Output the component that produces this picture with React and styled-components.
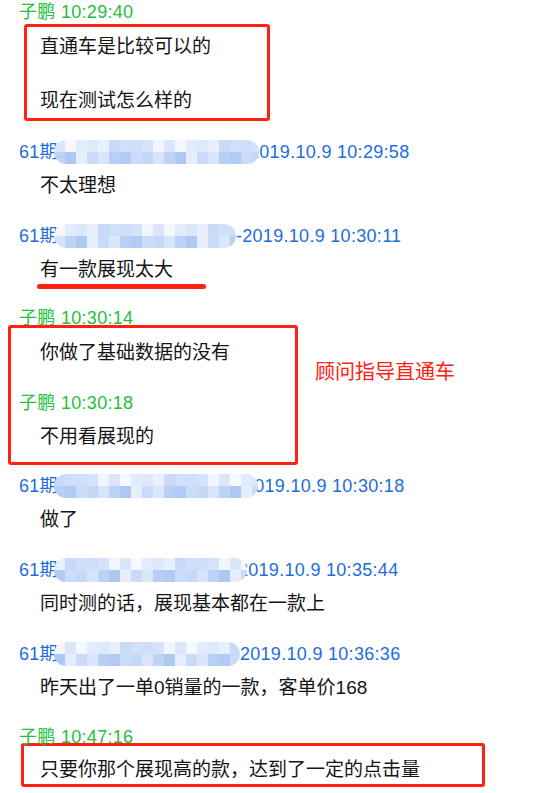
import styled, { createGlobalStyle } from "styled-components";

const Global = createGlobalStyle`
  body {
    margin: 0;
    background: #fff;
  }
`;

const GREEN = "#22c13a";
const BLUE = "#1e6de0";
const RED = "#ff2114";

const Page = styled.div`
  width: 534px;
  height: 793px;
  overflow: hidden;
  font-family: "Liberation Sans", "Noto Sans CJK SC", sans-serif;
  color: #151515;
`;

const Header = styled.div`
  margin-top: ${(p) => p.$gap || 0}px;
  padding-left: calc(19px - var(--inset, 0px));
  height: 24px;
  line-height: 24px;
  font-size: 18px;
  letter-spacing: 0.3px;
  white-space: nowrap;
  color: ${(p) => (p.$me ? GREEN : BLUE)};
`;

const Body = styled.div`
  margin-top: ${(p) => (p.$gap === undefined ? 10 : p.$gap)}px;
  padding-left: calc(40px - var(--inset, 0px));
  height: 24px;
  line-height: 24px;
  font-size: 19px;
  white-space: nowrap;
`;

const Box = styled.div`
  --inset: ${(p) => p.$left + 3}px;
  box-sizing: border-box;
  width: ${(p) => p.$width}px;
  margin-top: ${(p) => p.$top || 0}px;
  margin-left: ${(p) => p.$left}px;
  padding: ${(p) => p.$pt}px 0 ${(p) => p.$pb}px;
  border: 3px solid ${RED};
  border-radius: 3px;
  flex-shrink: 0;
`;

const Row = styled.div`
  display: flex;
  align-items: flex-start;
  margin-top: -5px;
`;

const Note = styled.div`
  margin-left: 17px;
  margin-top: 33px;
  font-size: 20px;
  line-height: 28px;
  color: ${RED};
  white-space: nowrap;
`;

const Underline = styled.div`
  margin: 2px 0 0 37px;
  width: 169px;
  height: 5px;
  border-radius: 3px;
  background: ${RED};
`;

const Mosaic = styled.span`
  position: relative;
  z-index: 1;
  display: inline-grid;
  vertical-align: top;
  grid-auto-flow: column;
  grid-template-rows: 12px 12px;
  grid-auto-columns: 11px;
  width: ${(p) => p.$w}px;
  height: 24px;
  margin-left: -4px;
  border-radius: 12px;
  overflow: hidden;
`;

const Tile = styled.span`
  display: block;
  background: ${(p) => p.$c};
`;

const Rest = styled.span`
  margin-left: ${(p) => p.$ml}px;
`;

const TOP = ["#dbe6fb", "#cfdff9", "#e9f0fd", "#f5f8fe", "#d5e3fa", "#c8daf8", "#e3ecfc", "#f1f6fe", "#d0e0f9", "#dde8fb"];
const BOT = ["#bdd3f6", "#c9dbf8", "#b2cbf4", "#d7e4fa", "#e6eefc", "#b8cff5", "#c4d8f7", "#adc8f3", "#dae6fb", "#cbdcf8"];

const Blur = ({ w, seed }) => {
  const cols = Math.ceil(w / 11);
  const tiles = [];
  for (let i = 0; i < cols; i++) {
    tiles.push(<Tile key={"t" + i} $c={TOP[(i * 3 + seed) % TOP.length]} />);
    tiles.push(<Tile key={"b" + i} $c={BOT[(i * 7 + seed) % BOT.length]} />);
  }
  return <Mosaic $w={w}>{tiles}</Mosaic>;
};

const Student = ({ gap, w, ml, seed, rest }) => (
  <Header $gap={gap}>
    61期
    <Blur w={w} seed={seed} />
    <Rest $ml={ml}>{rest}</Rest>
  </Header>
);

export default function App() {
  return (
    <Page>
      <Global />
      <Header $me>子鹏 10:29:40</Header>
      <Box $left={24} $width={246} $pt={8} $pb={5}>
        <Body $gap={0}>直通车是比较可以的</Body>
        <Body $gap={30}>现在测试怎么样的</Body>
      </Box>

      <Student gap={19} w={205} ml={-10} seed={0} rest="2019.10.9 10:29:58" />
      <Body>不太理想</Body>

      <Student gap={26} w={182} ml={0} seed={3} rest="-2019.10.9 10:30:11" />
      <Body>有一款展现太大</Body>
      <Underline />

      <Header $me $gap={17}>子鹏 10:30:14</Header>
      <Row>
        <Box $left={8} $width={290} $pt={3} $pb={13}>
          <Body>你做了基础数据的没有</Body>
          <Header $me $gap={26}>子鹏 10:30:18</Header>
          <Body>不用看展现的</Body>
        </Box>
        <Note>顾问指导直通车</Note>
      </Row>

      <Student gap={9} w={204} ml={-14} seed={5} rest="2019.10.9 10:30:18" />
      <Body>做了</Body>

      <Student gap={26} w={193} ml={-9} seed={2} rest="2019.10.9 10:35:44" />
      <Body>同时测的话，展现基本都在一款上</Body>

      <Student gap={26} w={186} ml={0} seed={7} rest="2019.10.9 10:36:36" />
      <Body>昨天出了一单0销量的一款，客单价168</Body>

      <Header $me $gap={25}>子鹏 10:47:16</Header>
      <Box $left={21} $width={464} $top={-6} $pt={2} $pb={2}>
        <Body>只要你那个展现高的款，达到了一定的点击量</Body>
      </Box>
    </Page>
  );
}
